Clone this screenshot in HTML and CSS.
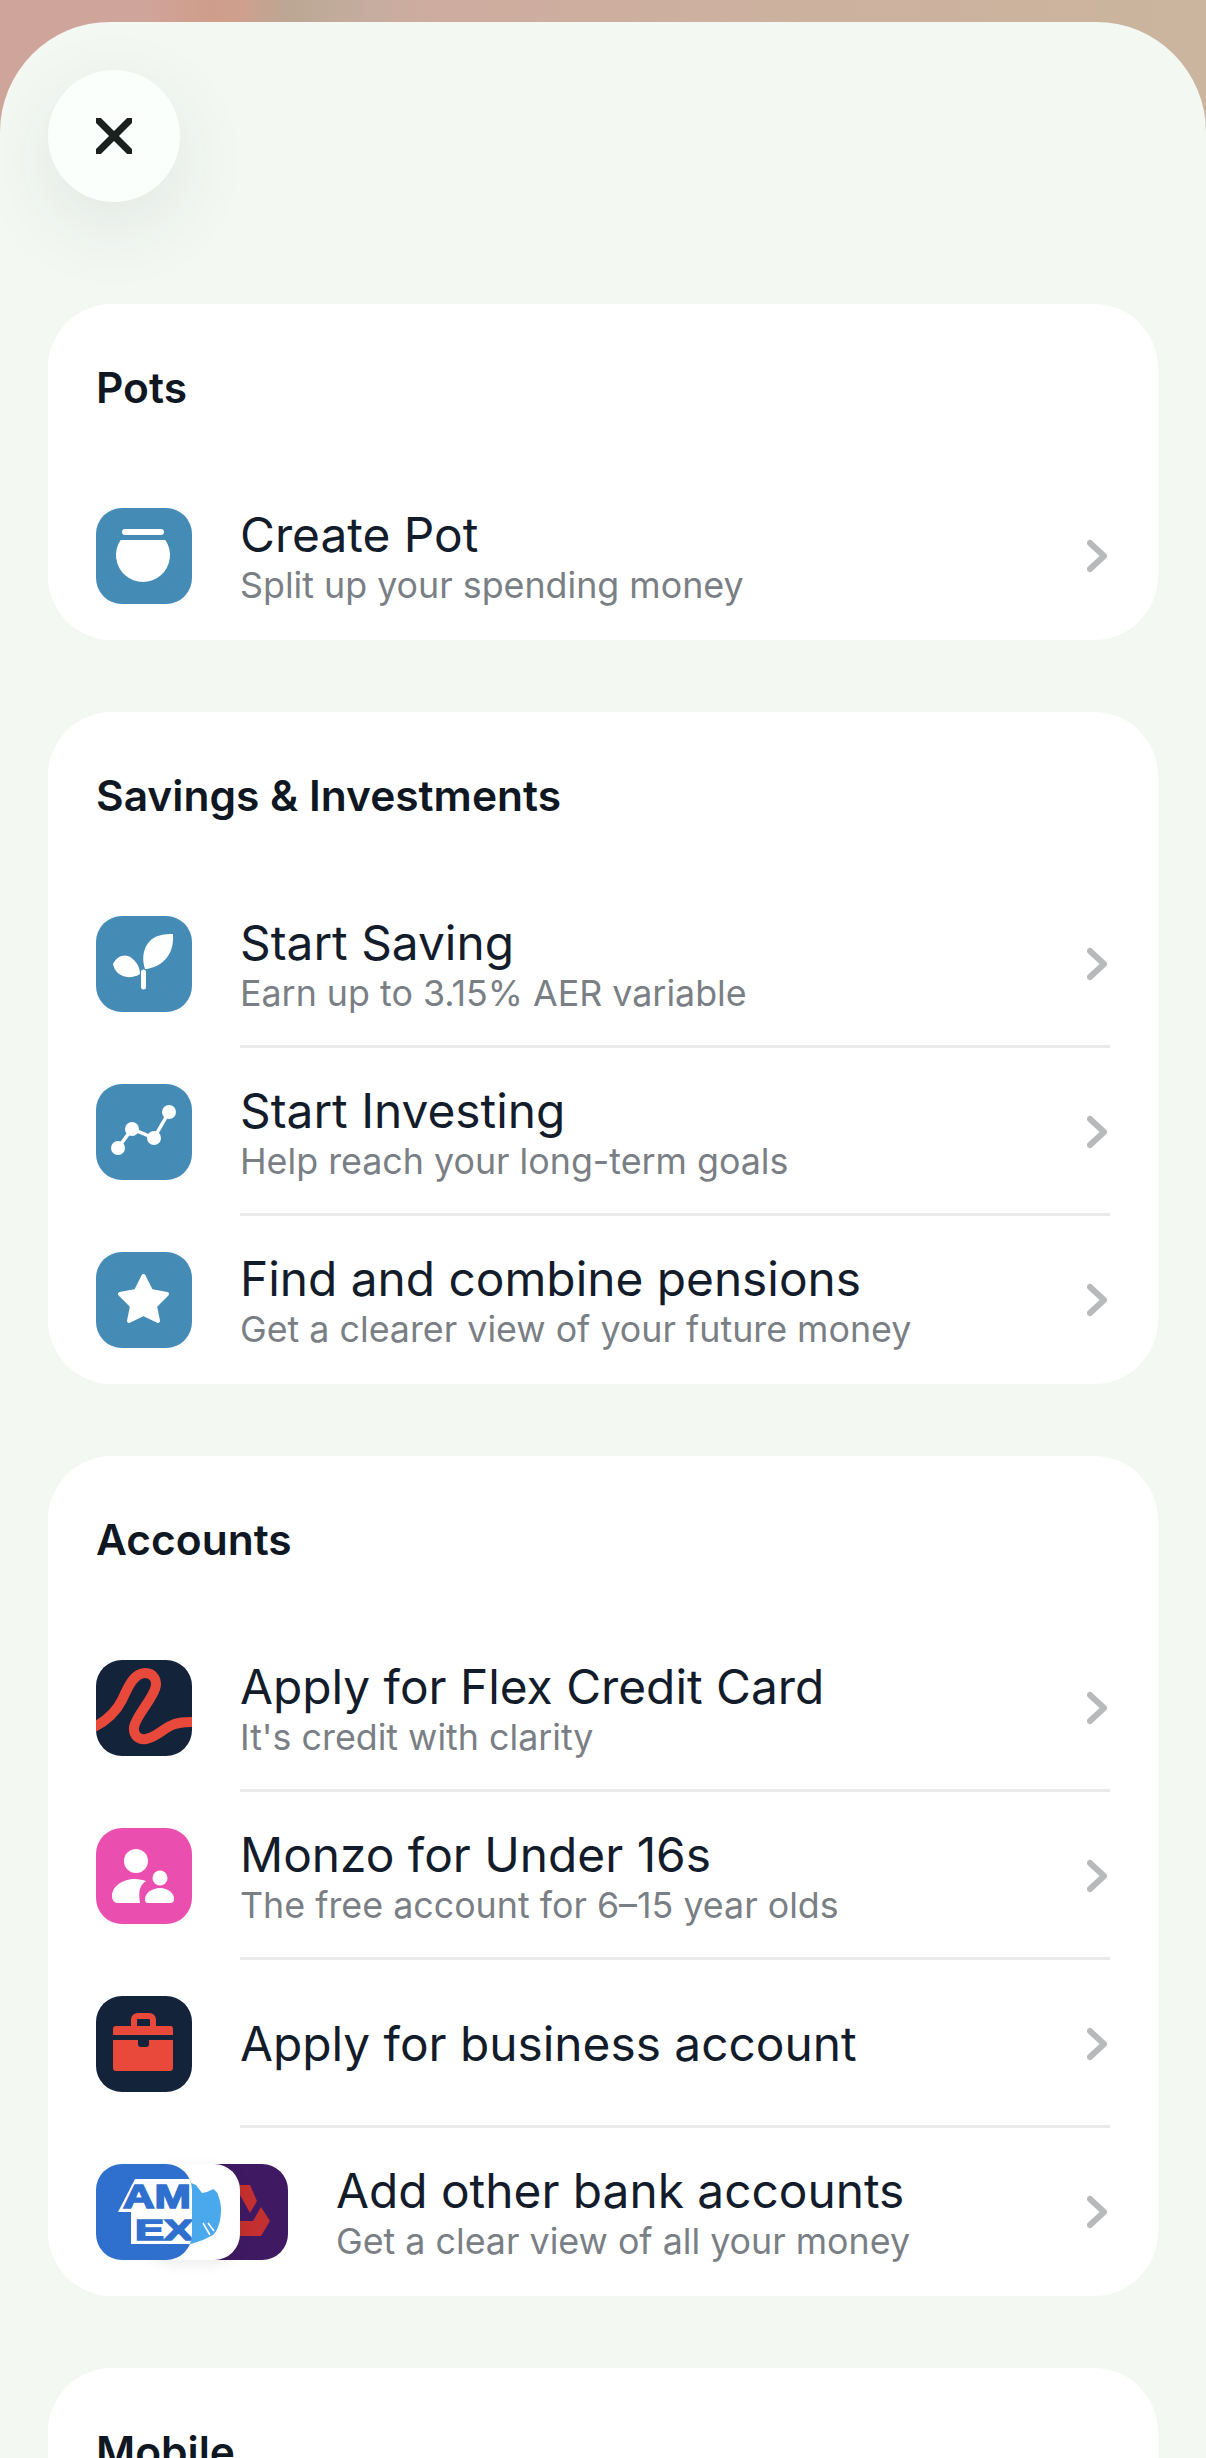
FILE: index.html
```html
<!DOCTYPE html>
<html lang="en">
<head>
  <meta charset="UTF-8">
  <meta name="viewport" content="width=device-width, initial-scale=1.0">
  <title>Add to Monzo</title>
  <link rel="stylesheet" href="styles.css">
</head>
<body>
  <main class="sheet">
    <button class="close" aria-label="Close">
      <svg width="36" height="36" viewBox="0 0 36 36"><path d="M2 2 L34 34 M34 2 L2 34" class="close-x"/></svg>
    </button>

    <section class="card">
      <h2 class="card-title">Pots</h2>
      <div class="row">
        <div class="icon blue">
          <svg viewBox="0 0 96 96"><rect x="26" y="21" width="42" height="6" rx="3" fill="#fff"/><path d="M24.600 32 H69.400 A27 27 0 1 1 24.600 32 Z" fill="#fff"/></svg>
        </div>
        <div class="row-body">
          <div class="row-text">
            <div class="row-title">Create Pot</div>
            <div class="row-sub">Split up your spending money</div>
          </div>
          <svg class="chevron" viewBox="0 0 24 36"><path d="M4 5 L18 18 L4 31"/></svg>
        </div>
      </div>
    </section>

    <section class="card">
      <h2 class="card-title">Savings &amp; Investments</h2>
      <div class="row">
        <div class="icon blue">
          <svg viewBox="0 0 96 96"><path d="M49 53 C44 38 50 24 62 20 C68 18 73 18 77 18 C78 32 73 42 64 48 C59 51 55 52 51 53 Z" fill="#fff"/><path d="M17 48 C20 41 27 38 32 40 C39 43 44 50 44 58 C38 62 30 62 25 59 C21 57 18 53 17 48 Z" fill="#fff"/><path d="M47.500 56 V71" stroke="#fff" stroke-width="5" stroke-linecap="round" fill="none"/></svg>
        </div>
        <div class="row-body divided">
          <div class="row-text">
            <div class="row-title">Start Saving</div>
            <div class="row-sub">Earn up to 3.15% AER variable</div>
          </div>
          <svg class="chevron" viewBox="0 0 24 36"><path d="M4 5 L18 18 L4 31"/></svg>
        </div>
      </div>
      <div class="row">
        <div class="icon blue">
          <svg viewBox="0 0 96 96"><path d="M22 64 L36 45 L58 54 L73 28" stroke="#fff" stroke-width="3.500" fill="none"/><circle cx="22" cy="64" r="7" fill="#fff"/><circle cx="36" cy="45" r="7" fill="#fff"/><circle cx="58" cy="54" r="7" fill="#fff"/><circle cx="73" cy="28" r="7" fill="#fff"/></svg>
        </div>
        <div class="row-body divided">
          <div class="row-text">
            <div class="row-title">Start Investing</div>
            <div class="row-sub">Help reach your long-term goals</div>
          </div>
          <svg class="chevron" viewBox="0 0 24 36"><path d="M4 5 L18 18 L4 31"/></svg>
        </div>
      </div>
      <div class="row">
        <div class="icon blue">
          <svg viewBox="0 0 96 96"><path d="M47.500 24 L55 39 L71 42 L59 54 L62 69 L47.500 62 L33 69 L36 54 L24 42 L40 39 Z" fill="#fff" stroke="#fff" stroke-width="4" stroke-linejoin="round"/></svg>
        </div>
        <div class="row-body">
          <div class="row-text">
            <div class="row-title">Find and combine pensions</div>
            <div class="row-sub">Get a clearer view of your future money</div>
          </div>
          <svg class="chevron" viewBox="0 0 24 36"><path d="M4 5 L18 18 L4 31"/></svg>
        </div>
      </div>
    </section>

    <section class="card">
      <h2 class="card-title">Accounts</h2>
      <div class="row">
        <div class="icon navy">
          <svg viewBox="0 0 96 96"><path d="M-2 67 C12 60 20 52 26 40 C32 27 38 13 49 13 C58 13 62 21 59 29 C55 41 40 56 38 67 C37 76 43 80 50 79 C60 77 66 70 74 66 C81 62 89 62 98 62" stroke="#e8493a" stroke-width="10" fill="none"/></svg>
        </div>
        <div class="row-body divided">
          <div class="row-text">
            <div class="row-title">Apply for Flex Credit Card</div>
            <div class="row-sub">It's credit with clarity</div>
          </div>
          <svg class="chevron" viewBox="0 0 24 36"><path d="M4 5 L18 18 L4 31"/></svg>
        </div>
      </div>
      <div class="row">
        <div class="icon pink">
          <svg viewBox="0 0 96 96"><circle cx="40" cy="33" r="12" fill="#fff"/><path d="M16 68 C16 58 27 51 39 51 C43 51 47 52 50 53 C44 57 42 63 44 75 H22 C18 75 16 72 16 68 Z" fill="#fff"/><circle cx="64" cy="50" r="7.500" fill="#fff"/><path d="M49 71 C49 65 56 60 64 60 C72 60 78 65 78 71 C78 74 76 75 74 75 H52 C50 75 49 74 49 71 Z" fill="#fff"/></svg>
        </div>
        <div class="row-body divided">
          <div class="row-text">
            <div class="row-title">Monzo for Under 16s</div>
            <div class="row-sub">The free account for 6–15 year olds</div>
          </div>
          <svg class="chevron" viewBox="0 0 24 36"><path d="M4 5 L18 18 L4 31"/></svg>
        </div>
      </div>
      <div class="row">
        <div class="icon navy">
          <svg viewBox="0 0 96 96"><path d="M38 31 V24 C38 21 40 20 42 20 H53 C55 20 57 21 57 24 V31" stroke="#e8493a" stroke-width="6" fill="none"/><path d="M20 30 H75 C76 30 77 31 77 33 V39 H17 V33 C17 31 18 30 20 30 Z" fill="#e8493a"/><path d="M17 44 H42 V48 C42 50 43 51 45 51 H50 C52 51 53 50 53 48 V44 H77 V72 C77 74 76 75 74 75 H20 C18 75 17 74 17 72 Z" fill="#e8493a"/></svg>
        </div>
        <div class="row-body divided">
          <div class="row-text single">
            <div class="row-title">Apply for business account</div>
          </div>
          <svg class="chevron" viewBox="0 0 24 36"><path d="M4 5 L18 18 L4 31"/></svg>
        </div>
      </div>
      <div class="row">
        <div class="icon-stack">
          <div class="icon natwest">
            <svg viewBox="0 0 96 96"><path d="M48 21 H58 L65 37 L58 49 L48 31 Z" fill="#c4302f"/><path d="M69 43 L78 57 L69 72 H48 V57 H61 Z" fill="#c4302f"/></svg>
          </div>
          <div class="icon barclays">
            <svg viewBox="0 0 96 96"><path d="M40 17 L47 19 L52 21 L58 29 L63 28 L69 25 C72 27 74 29 74 31 C76 36 77 41 77 46 C77 52 76 58 74 63 C73 66 71 69 69 71 L59 76 L47 80 L40 80 Z" fill="#4aa9ec"/><path d="M59 59 L66 71 M64 59 L70 67" stroke="#fff" stroke-width="1.500" fill="none"/></svg>
          </div>
          <div class="icon amex">
            <svg viewBox="0 0 96 96">
              <path d="M22 48 L39 15 H96 V80 H35 V48 Z" fill="#fff"/>
              <text x="27" y="44" textLength="68" lengthAdjust="spacingAndGlyphs" class="amex-am">AM</text>
              <text x="39" y="76" textLength="58" lengthAdjust="spacingAndGlyphs" class="amex-ex">EX</text>
            </svg>
          </div>
        </div>
        <div class="row-body">
          <div class="row-text">
            <div class="row-title">Add other bank accounts</div>
            <div class="row-sub">Get a clear view of all your money</div>
          </div>
          <svg class="chevron" viewBox="0 0 24 36"><path d="M4 5 L18 18 L4 31"/></svg>
        </div>
      </div>
    </section>

    <section class="card">
      <h2 class="card-title">Mobile</h2>
    </section>
  </main>
</body>
</html>
```

FILE: styles.css
```css
* {
  box-sizing: border-box;
  margin: 0;
  padding: 0;
}
html, body {
  height: 2458px;
  overflow: hidden;
}
body {
  font-family: Inter, "Liberation Sans", sans-serif;
  background: linear-gradient(to right, #cfa59b 0, #cfa59b 140px, #cf9d8b 210px, #cf9f8e 240px, #bba794 290px, #c6ad9f 370px, #ceac9f 440px, #cdb09f 700px, #cbb59e 1206px);
  padding-top: 22px;
}
/* Foglio principale */
.sheet {
  height: 2436px;
  overflow: hidden;
  background: #f3f8f3;
  border-radius: 110px 110px 0 0;
  padding: 48px 48px 0;
}
.close {
  display: flex;
  align-items: center;
  justify-content: center;
  width: 132px;
  height: 132px;
  border: none;
  border-radius: 50%;
  background: #fbfffc;
  box-shadow: 0 24px 80px rgba(40, 50, 50, 0.09);
  margin-bottom: 102px;
}
.close-x {
  stroke: #1a201e;
  stroke-width: 7;
  stroke-linecap: round;
  fill: none;
}
/* Card delle sezioni */
.card {
  background: #fff;
  border-radius: 64px;
  padding: 0 48px;
  margin-bottom: 72px;
}
.card-title {
  height: 168px;
  padding-top: 60px;
  font-size: 42.500px;
  line-height: 48px;
  font-weight: 600;
  color: #0f1722;
}
.row {
  display: flex;
  gap: 48px;
}
.icon {
  flex: none;
  width: 96px;
  height: 96px;
  margin-top: 36px;
  border-radius: 26px;
  overflow: hidden;
}
.icon svg {
  display: block;
  width: 96px;
  height: 96px;
}
.blue { background: #448bb5; }
.navy { background: #13233a; }
.pink { background: #ea4fb0; }
.icon-stack {
  flex: none;
  position: relative;
  width: 192px;
  height: 168px;
}
.icon-stack .icon {
  position: absolute;
  top: 0;
}
.amex {
  left: 0;
  background: #2f6fce;
}
.barclays {
  left: 48px;
  background: #fff;
  box-shadow: 0 4px 14px rgba(0, 0, 0, 0.08);
}
.natwest {
  left: 96px;
  background: #3f1a63;
}
.amex-am,
.amex-ex {
  font-family: "Liberation Sans", sans-serif;
  font-weight: 700;
  fill: #2f6fce;
  stroke: #2f6fce;
  stroke-width: 1.600;
}
.amex-am { font-size: 34px; }
.amex-ex { font-size: 30px; }
.row-body {
  flex: 1;
  display: flex;
  align-items: center;
  height: 168px;
}
.divided {
  border-bottom: 3px solid #e8ebe9;
  padding-top: 3px;
}
.row-text {
  flex: 1;
  margin-top: 8px;
}
.row-text.single {
  margin-top: -1px;
}
.row-title {
  font-size: 47.800px;
  line-height: 50px;
  font-weight: 400;
  color: #131c2b;
}
.row-sub {
  font-size: 35.800px;
  line-height: 50px;
  color: #7a7f85;
}
.chevron {
  flex: none;
  width: 24px;
  height: 36px;
  fill: none;
  stroke: #b8b9bb;
  stroke-width: 6;
  stroke-linecap: round;
  stroke-linejoin: round;
}
```
